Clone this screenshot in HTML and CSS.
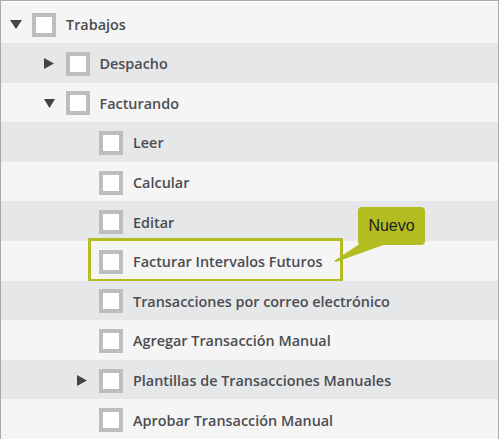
FILE: index.html
```html
<!DOCTYPE html>
<html lang="es">
<head>
<meta charset="utf-8">
<link rel="stylesheet" href="styles.css">
</head>
<body>
<div class="tree">
  <div class="row light first lvl0">
    <span class="toggle"><svg width="12" height="9" viewBox="0 0 12 9"><polygon points="0,0 12,0 6,9" fill="#444"/></svg></span>
    <span class="box"></span><span class="label">Trabajos</span>
  </div>
  <div class="row dark lvl1">
    <span class="toggle"><svg width="10" height="11" viewBox="0 0 10 11"><polygon points="0,0 10,5.5 0,11" fill="#444"/></svg></span>
    <span class="box"></span><span class="label">Despacho</span>
  </div>
  <div class="row light lvl1">
    <span class="toggle"><svg width="11" height="9" viewBox="0 0 11 9"><polygon points="0,0 11,0 5.5,9" fill="#444"/></svg></span>
    <span class="box"></span><span class="label">Facturando</span>
  </div>
  <div class="row dark lvl2"><span class="toggle"></span><span class="box"></span><span class="label">Leer</span></div>
  <div class="row light lvl2"><span class="toggle"></span><span class="box"></span><span class="label">Calcular</span></div>
  <div class="row dark lvl2"><span class="toggle"></span><span class="box"></span><span class="label">Editar</span></div>
  <div class="row light lvl2 is-new"><span class="toggle"></span><span class="box"></span><span class="label">Facturar Intervalos Futuros</span><span class="highlight"></span></div>
  <div class="row dark lvl2"><span class="toggle"></span><span class="box"></span><span class="label">Transacciones por correo electrónico</span></div>
  <div class="row light lvl2"><span class="toggle"></span><span class="box"></span><span class="label">Agregar Transacción Manual</span></div>
  <div class="row dark lvl2">
    <span class="toggle"><svg width="10" height="11" viewBox="0 0 10 11"><polygon points="0,0 10,5.5 0,11" fill="#444"/></svg></span>
    <span class="box"></span><span class="label">Plantillas de Transacciones Manuales</span>
  </div>
  <div class="row light lvl2"><span class="toggle"></span><span class="box"></span><span class="label">Aprobar Transacción Manual</span></div>

  <div class="callout">
    <svg class="tail" width="60" height="24" viewBox="0 0 60 24"><polygon points="28,0 56,0 3,19 1,18" fill="#b3bc20"/></svg>
    <div class="bubble">Nuevo</div>
  </div>
</div>
</body>
</html>
```

FILE: styles.css
```css
html, body {
  margin: 0;
  padding: 0;
  background: #ffffff;
}
body {
  width: 500px;
  height: 440px;
  overflow: hidden;
  font-family: "Open Sans", "Liberation Sans", sans-serif;
}
.tree {
  position: relative;
  width: 497px;
  border-top: 1px solid #a9a9a9;
  border-left: 1px solid #a9a9a9;
  border-right: 1px solid #a9a9a9;
  padding-top: 1px;
  background: #ffffff;
}
.row {
  position: relative;
  box-sizing: border-box;
  height: 39.6px;
  padding-top: 2px;
  display: flex;
  align-items: center;
}
.row.first {
  height: 41px;
  padding-top: 4px;
}
.light { background: #f5f5f5; }
.dark { background: #e6e7e8; }
.lvl0 { padding-left: 9px; }
.lvl1 { padding-left: 42.5px; }
.lvl2 { padding-left: 76px; }
.toggle {
  width: 22px;
  flex: none;
  display: flex;
  align-items: center;
}
.toggle svg { display: block; }
.box {
  flex: none;
  box-sizing: border-box;
  width: 24px;
  height: 24px;
  border: 4px solid #bcbdbf;
  background: #ffffff;
}
.label {
  margin-left: 10px;
  font-size: 14.4px;
  font-weight: 600;
  color: #4b4d51;
  white-space: nowrap;
}
.highlight {
  position: absolute;
  left: 87px;
  top: -3px;
  width: 255px;
  height: 44px;
  box-sizing: border-box;
  border: 3px solid #b3bc20;
  pointer-events: none;
}
.callout {
  position: absolute;
  left: 332px;
  top: 206px;
  width: 95px;
  height: 60px;
}
.bubble {
  position: absolute;
  left: 25px;
  top: 0;
  width: 67px;
  height: 38px;
  box-sizing: border-box;
  border-radius: 4px;
  background: #b3bc20;
  color: #222222;
  font-family: "Liberation Sans", Arial, sans-serif;
  font-size: 16px;
  line-height: 38px;
  text-align: center;
  padding-bottom: 3px;
}
.tail {
  position: absolute;
  left: 0;
  top: 36px;
  display: block;
}
```
